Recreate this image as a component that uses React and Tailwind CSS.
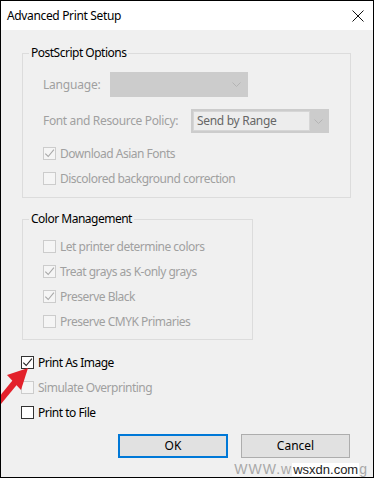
import React from "react";

const FONT = { fontFamily: '"Noto Sans", "Open Sans", sans-serif' };

function Box({ checked, disabled }) {
  return (
    <span
      className={
        "w-[13px] h-[13px] shrink-0 border flex items-center justify-center " +
        (disabled ? "border-[#cccccc] bg-[#f5f5f5]" : "border-[#333333] bg-white")
      }
    >
      {checked && (
        <svg width="11" height="11" viewBox="0 0 11 11">
          <path
            d="M1.3 5.6 L4.2 8.5 L9.9 1.6"
            fill="none"
            stroke={disabled ? "#a8a8a8" : "#222222"}
            strokeWidth="1.1"
          />
        </svg>
      )}
    </span>
  );
}

function Check({ label, checked, disabled }) {
  return (
    <div className="h-[25px] flex items-center gap-[4px]">
      <Box checked={checked} disabled={disabled} />
      <span
        className={
          "text-[12px] tracking-[-0.5px] " + (disabled ? "text-[#a0a0a0]" : "text-black")
        }
      >
        {label}
      </span>
    </div>
  );
}

function Chevron({ color = "#b4b4b4" }) {
  return (
    <svg width="9" height="5" viewBox="0 0 9 5">
      <path d="M0.5 0.5 L4.5 4.5 L8.5 0.5" fill="none" stroke={color} strokeWidth="1" />
    </svg>
  );
}

export default function App() {
  return (
    <div
      className="w-[374px] h-[478px] border border-black bg-[#f0f0f0] relative overflow-hidden flex flex-col"
      style={FONT}
    >
      <div className="h-[29px] bg-white flex items-center justify-between pl-[6px] pr-[9px] shrink-0">
        <span className="text-[12px] tracking-[-0.35px] text-black">Advanced Print Setup</span>
        <svg width="12" height="12" viewBox="0 0 12 12">
          <path d="M0.5 0.5 L11.5 11.5 M11.5 0.5 L0.5 11.5" stroke="#111" strokeWidth="1" />
        </svg>
      </div>

      <fieldset className="ml-[21px] mt-[15px] w-[329px] border border-[#dcdcdc] p-0 pb-[6px] flex flex-col pl-[20px]">
        <legend className="ml-[-14px] px-[2px] text-[12px] tracking-[-0.5px] text-black leading-[16px]">
          PostScript Options
        </legend>
        <div className="mt-[11px] h-[25px] flex items-center">
          <span className="w-[67px] text-[12px] tracking-[-0.2px] text-[#a0a0a0]">Language:</span>
          <div className="w-[138px] h-[25px] bg-[#cccccc] flex items-center justify-end pr-[7px]">
            <Chevron />
          </div>
        </div>
        <div className="mt-[12px] h-[24px] flex items-center">
          <span className="w-[148px] text-[12px] tracking-[-0.35px] text-[#a0a0a0]">
            Font and Resource Policy:
          </span>
          <div className="w-[138px] h-[24px] bg-[#cccccc] flex items-center p-[2px]">
            <div className="w-[117px] h-[20px] bg-[#ededed] border border-[#d6d6d6] flex items-center pl-[3px] text-[12px] tracking-[-0.3px] text-[#666666]">
              Send by Range
            </div>
            <div className="flex-1 flex justify-center">
              <Chevron />
            </div>
          </div>
        </div>
        <div className="mt-[8px]">
          <Check label="Download Asian Fonts" checked disabled />
          <Check label="Discolored background correction" disabled />
        </div>
      </fieldset>

      <fieldset className="ml-[21px] mt-[13px] w-[231px] border border-[#dcdcdc] p-0 pb-[5px] flex flex-col pl-[20px]">
        <legend className="ml-[-14px] px-[2px] text-[12px] tracking-[-0.5px] text-black leading-[16px]">
          Color Management
        </legend>
        <div className="mt-[7px]">
          <Check label="Let printer determine colors" disabled />
          <Check label="Treat grays as K-only grays" checked disabled />
          <Check label="Preserve Black" checked disabled />
          <Check label="Preserve CMYK Primaries" disabled />
        </div>
      </fieldset>

      <div className="ml-[20px] mt-[10px]">
        <Check label="Print As Image" checked />
        <Check label="Simulate Overprinting" disabled />
        <Check label="Print to File" />
      </div>

      <div className="mt-[9px] flex justify-end gap-[13px] pr-[23px]">
        <button className="w-[110px] h-[24px] bg-[#e1e1e1] border-2 border-[#0078d7] text-[12px] text-black flex items-center justify-center">
          OK
        </button>
        <button className="w-[109px] h-[24px] bg-[#e1e1e1] border border-[#adadad] text-[12px] text-black flex items-center justify-center">
          Cancel
        </button>
      </div>

      <svg className="absolute left-0 top-[360px]" width="30" height="44" viewBox="0 0 30 44">
        <path d="M15 20 L-3 42" stroke="#e3212b" strokeWidth="6" />
        <polygon points="27,7 6,14 20,29" fill="#e3212b" />
      </svg>

      <div className="absolute right-[6px] bottom-[1px] flex items-end leading-none">
        <span
          className="text-[14px] text-[#a8a8a8] tracking-[1px]"
          style={{ fontFamily: '"Liberation Sans", sans-serif' }}
        >
          WWW.w
        </span>
        <span
          className="text-[13px] text-[#222] bg-white px-[1px]"
          style={{ fontFamily: '"Liberation Sans", sans-serif' }}
        >
          wsxdn.com
        </span>
        <span
          className="text-[14px] text-[#a8a8a8]"
          style={{ fontFamily: '"Liberation Sans", sans-serif' }}
        >
          g
        </span>
      </div>
    </div>
  );
}
